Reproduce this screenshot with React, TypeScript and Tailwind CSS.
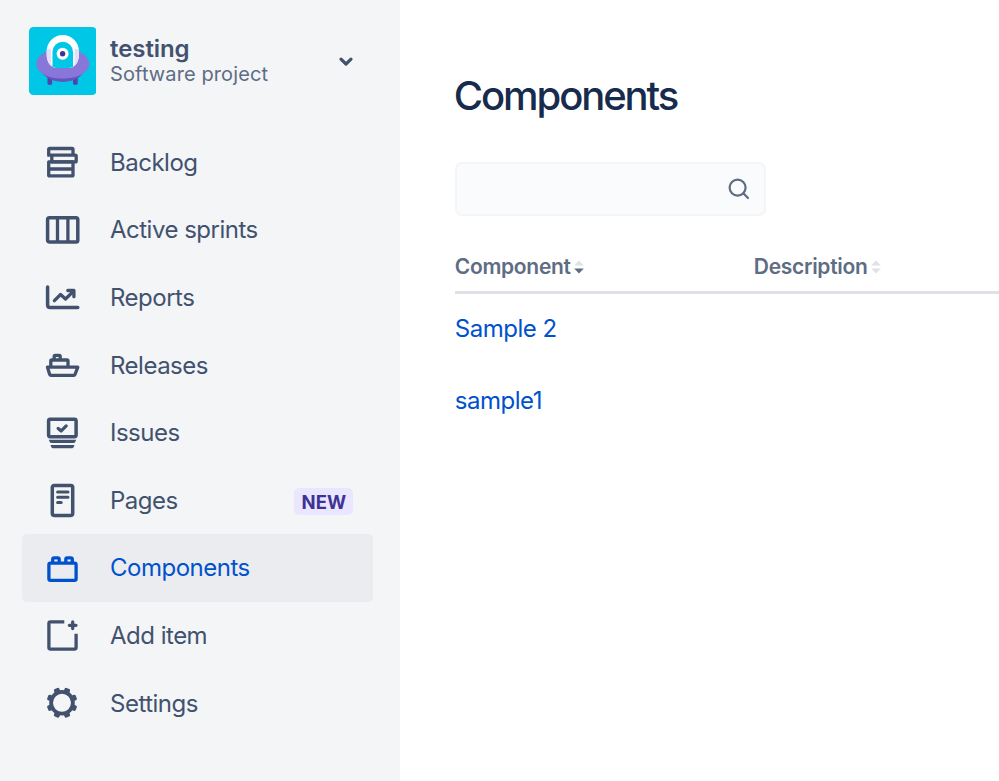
import type { ReactNode } from "react"

interface NavItem {
    label: string;
    icon: ReactNode;
    badge?: string;
    active?: boolean;
}

interface Column {
    label: string;
    sorted: boolean;
}

const Icon = ({ children }: { children: ReactNode }) => (
    <svg
        width="40"
        height="40"
        viewBox="0 0 40 40"
        fill="none"
        stroke="currentColor"
        strokeWidth="3.3"
        strokeLinejoin="round"
        className="shrink-0"
    >
        {children}
    </svg>
)

const BacklogIcon = () => (
    <Icon>
        <path d="M6.7 13V7.5Q6.7 6.5 7.7 6.5H30Q31 6.5 31 7.5V13" />
        <path d="M5.2 13.2H33.2Q34.2 13.2 34.2 14.2V18.9Q34.2 19.9 33.2 19.9H9.8V13.2" />
        <path d="M6.7 19.9H31V32.9Q31 33.9 30 33.9H7.7Q6.7 33.9 6.7 32.9ZM6.7 27H31" />
    </Icon>
)

const BoardIcon = () => (
    <Icon>
        <rect x="5.6" y="7.8" width="30.2" height="24.2" rx="1.8" strokeWidth="3.5" />
        <path d="M15.5 8V32M25.9 8V32" />
    </Icon>
)

const ReportsIcon = () => (
    <Icon>
        <path d="M5.6 9.9V28.1Q5.6 30.6 8.1 30.6H35.8" strokeWidth="3.5" strokeLinecap="round" />
        <path d="M12.4 23.7L18.6 17.5L23.5 22L30.8 14.9" strokeLinecap="round" />
        <path d="M25.8 13.5H31.9V19.7" strokeLinecap="round" />
        <path d="M27 13.8H32V18.8Z" fill="currentColor" stroke="none" />
    </Icon>
)

const ShipIcon = () => (
    <Icon>
        <path d="M5.5 22.2H35.8L33 29.5Q32.7 30.3 31.8 30.3H8.8Q7.8 30.3 7.6 29.3Z" />
        <path d="M8.8 22V16Q8.8 15 9.8 15H25Q26 15 26 16V22" />
        <path d="M12.2 15V11.3Q12.2 10.3 13.2 10.3H17.2Q18.2 10.3 18.2 11.3V15" />
    </Icon>
)

const IssuesIcon = () => (
    <Icon>
        <rect x="6.6" y="6.2" width="27.5" height="17.5" rx="1.6" strokeWidth="3.5" />
        <path d="M16.2 15.4L19.2 17.9L24.2 12.9" strokeLinecap="round" />
        <path d="M6.8 26.8H34.2L33.2 29Q32.7 30 31.6 30H9.4Q8.3 30 7.8 29ZM8.5 32H32.5L31.7 34Q31.2 35.2 30 35.2H11Q9.8 35.2 9.3 34Z" fill="currentColor" stroke="none" />
    </Icon>
)

const PageIcon = () => (
    <Icon>
        <rect x="10.3" y="5.4" width="20.4" height="30" rx="1.8" strokeWidth="3.5" />
        <path d="M15.6 12.1H26M15.6 17.2H26M15.6 22.4H19.2" strokeWidth="3" strokeLinecap="round" />
    </Icon>
)

const ComponentIcon = () => (
    <Icon>
        <rect x="6.9" y="15.1" width="27.2" height="17.2" rx="1.6" />
        <path d="M10.7 15V11.4Q10.7 9.9 12.2 9.9H15.7Q17.2 9.9 17.2 11.4V15M23.8 15V11.4Q23.8 9.9 25.3 9.9H28.8Q30.3 9.9 30.3 11.4V15" />
    </Icon>
)

const AddItemIcon = () => (
    <Icon>
        <path d="M22.3 6.9H8.4Q6.9 6.9 6.9 8.4V32.6Q6.9 34.1 8.4 34.1H32.6Q34.1 34.1 34.1 32.6V18.7" />
        <path d="M30.7 7V13.6M27.4 10.3H34" strokeLinecap="round" />
    </Icon>
)

const teeth = [22.5, 67.5, 112.5, 157.5, 202.5, 247.5, 292.5, 337.5]

const GearIcon = () => (
    <Icon>
        <circle cx="20" cy="19.8" r="10.9" strokeWidth="3.8" />
        {teeth.map((angle) => (
            <rect
                key={angle}
                x="17.1"
                y="4.4"
                width="5.8"
                height="6"
                rx="1.5"
                fill="currentColor"
                stroke="none"
                transform={`rotate(${angle} 20 19.8)`}
            />
        ))}
    </Icon>
)

const ProjectAvatar = () => (
    <svg width="67.6" height="68" viewBox="0 0 68 68" preserveAspectRatio="none" className="shrink-0">
        <rect width="68" height="68" rx="4.5" fill="#00c7e6" />
        <path d="M18.6 50H23.3V56.5Q23.3 57.8 22 57.8H19.9Q18.6 57.8 18.6 56.5ZM44.3 50H49V56.5Q49 57.8 47.7 57.8H45.6Q44.3 57.8 44.3 56.5Z" fill="#5243aa" />
        <ellipse cx="34" cy="40" rx="22.5" ry="15" fill="#6554c0" />
        <path d="M34 21.5C49 21.5 60.6 28 60.6 37C60.6 45.5 49 51.6 34 51.6S7.4 45.5 7.4 37C7.4 28 19 21.5 34 21.5Z" fill="#8777d9" />
        <path d="M17.8 24.2A16.2 16.2 0 0 1 50.2 24.2V28C50.2 35 46 41 40 41H28C22 41 17.8 35 17.8 28Z" fill="#fff" />
        <path d="M17.8 21.7H50.2V28C50.2 35 46 41 40 41H28C22 41 17.8 35 17.8 28Z" fill="#e4dff7" />
        <path d="M22.2 21.7H45.8V37.5L40 41H28L22.2 37.5Z" fill="#fff" />
        <path d="M23.6 25A10.3 10.3 0 0 1 44.3 25V39.7Q42 41 40 41H28Q26 41 23.6 39.7Z" fill="#00c7e6" />
        <circle cx="33.8" cy="26.8" r="6" fill="#fff" />
        <circle cx="33.8" cy="26.8" r="2.7" fill="#403294" />
    </svg>
)

const navItems: NavItem[] = [
    { label: "Backlog", icon: <BacklogIcon /> },
    { label: "Active sprints", icon: <BoardIcon /> },
    { label: "Reports", icon: <ReportsIcon /> },
    { label: "Releases", icon: <ShipIcon /> },
    { label: "Issues", icon: <IssuesIcon /> },
    { label: "Pages", icon: <PageIcon />, badge: "NEW" },
    { label: "Components", icon: <ComponentIcon />, active: true },
    { label: "Add item", icon: <AddItemIcon /> },
    { label: "Settings", icon: <GearIcon /> },
]

const columns: Column[] = [
    { label: "Component", sorted: true },
    { label: "Description", sorted: false },
]

const rows = ["Sample 2", "sample1"]

const Sidebar = () => (
    <aside className="w-[400.4px] shrink-0 bg-[#f4f5f7] pl-[22px] pr-[27px] pt-[27px] text-[#42526e]">
        <div className="flex h-[68px] items-center pl-[6.5px]">
            <ProjectAvatar />
            <div className="ml-[14px] flex-1">
                <div className="text-[24px] font-semibold leading-[26px] tracking-[-0.1px]">testing</div>
                <div className="text-[20px] leading-[24px] tracking-[0.1px] text-[#5e6c84]">Software project</div>
            </div>
            <svg
                width="18"
                height="18"
                viewBox="0 0 18 18"
                fill="none"
                stroke="currentColor"
                strokeWidth="3.2"
                strokeLinecap="round"
                strokeLinejoin="round"
                className="mr-[18px]"
            >
                <path d="M4 7.2L9 12L14 7.2" />
            </svg>
        </div>
        <nav className="mt-[33.4px]">
            {navItems.map((item) => (
                <a
                    key={item.label}
                    href="#"
                    className={`flex h-[67.6px] items-center rounded-[5px] pl-5 pr-5 ${
                        item.active ? "bg-[#ebecf0] text-[#0052cc]" : ""
                    }`}
                >
                    {item.icon}
                    <span className="ml-7 flex-1 pt-[1.2px] text-[24px] leading-8 tracking-[-0.5px]">{item.label}</span>
                    {item.badge && (
                        <span className="mt-[3px] flex h-[27px] w-[59px] items-center justify-center rounded-[5px] bg-[#eae6ff] pt-[2px] text-[18.5px] font-bold text-[#403294]">
                            {item.badge}
                        </span>
                    )}
                </a>
            ))}
        </nav>
    </aside>
)

const SortArrows = ({ sorted }: { sorted: boolean }) => (
    <svg width="10" height="14" viewBox="0 0 10 14" className="ml-[3px]">
        <path d="M0.2 5.5L5 0.5L9.8 5.5Z" fill="#dfe1e6" />
        <path d="M0.2 8.5L5 13.5L9.8 8.5Z" fill={sorted ? "#5e6c84" : "#dfe1e6"} />
    </svg>
)

export default function App() {
    return (
        <div className="flex h-[781px] w-[999px] overflow-hidden bg-white font-['Inter',sans-serif]">
            <Sidebar />
            <main className="min-w-0 flex-1 pl-[54.4px] pt-[72px]">
                <h1 className="-ml-px text-[40px] font-medium leading-[48px] tracking-[-2.1px] text-[#172b4d]">Components</h1>
                <div className="mt-[42px] flex h-[54px] w-[311px] items-center justify-end rounded-[7px] border-2 border-[#f4f5f7] bg-[#fafbfc] pr-[13px]">
                    <svg width="24" height="24" viewBox="0 0 24 24" fill="none" stroke="#5e6c84" strokeWidth="2.2" strokeLinecap="round">
                        <circle cx="10.6" cy="10.6" r="8" />
                        <path d="M16.4 16.4L21 21" />
                    </svg>
                </div>
                <div className="mt-[34px] flex h-[44px] border-b-[3px] border-[#dfe1e6]">
                    {columns.map((column) => (
                        <div key={column.label} className="flex h-[34px] w-[299px] shrink-0 items-center text-[21px] font-semibold tracking-[-0.3px] text-[#5e6c84]">
                            {column.label}
                            <SortArrows sorted={column.sorted} />
                        </div>
                    ))}
                </div>
                {rows.map((row) => (
                    <div key={row} className="flex h-[72.7px] items-start pt-[18.5px]">
                        <a href="#" className="text-[24px] leading-8 tracking-[-0.5px] text-[#0052cc]">
                            {row}
                        </a>
                    </div>
                ))}
            </main>
        </div>
    )
}
